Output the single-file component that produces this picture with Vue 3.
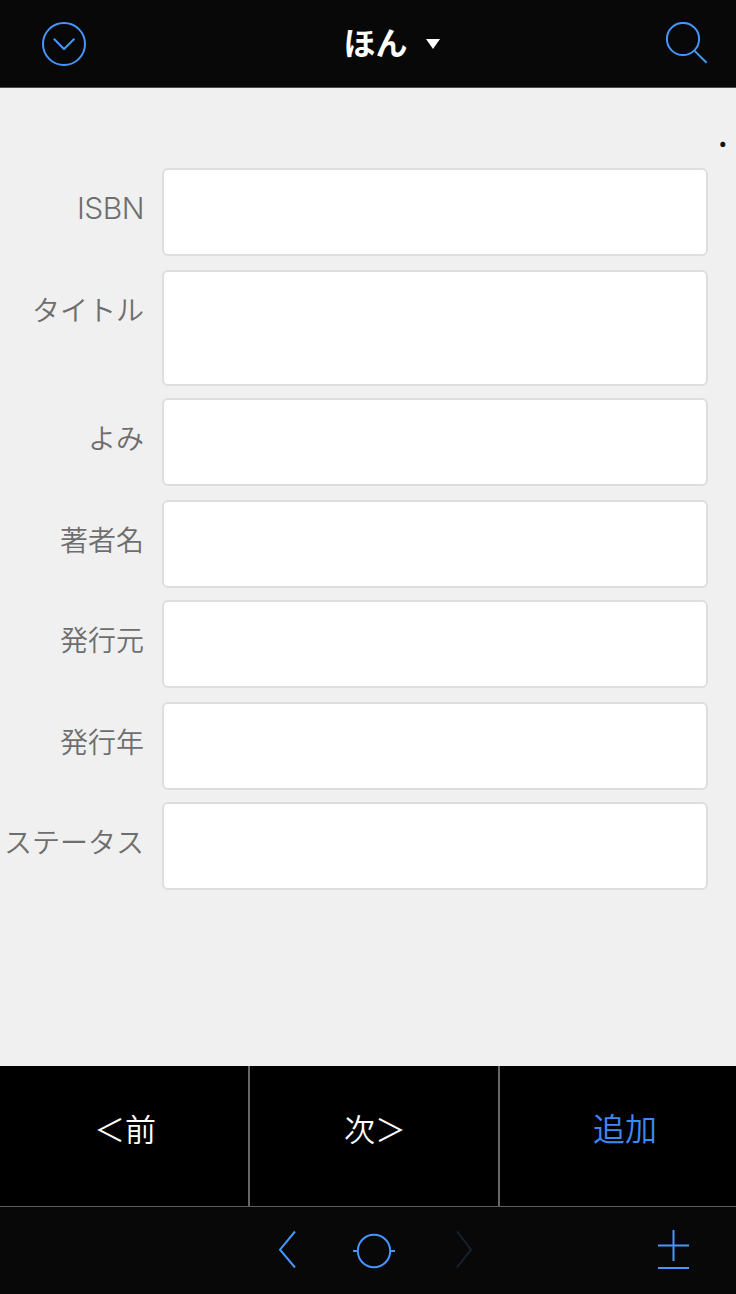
<script setup>
import { ref } from 'vue';

const title = ref('ほん');

const fields = ref([
    { id: 'isbn', label: 'ISBN', value: '', latin: true },
    { id: 'title', label: 'タイトル', value: '', tall: true },
    { id: 'yomi', label: 'よみ', value: '' },
    { id: 'author', label: '著者名', value: '' },
    { id: 'publisher', label: '発行元', value: '' },
    { id: 'year', label: '発行年', value: '' },
    { id: 'status', label: 'ステータス', value: '' }
]);

const actions = [
    { id: 'prev', label: '＜前' },
    { id: 'next', label: '次＞' },
    { id: 'add', label: '追加', primary: true }
];
</script>

<template>
    <div class="screen">
        <!-- Header -->
        <header class="navbar">
            <button class="icon-btn">
                <svg class="icon" width="46" height="46" viewBox="0 0 46 46">
                    <circle cx="23" cy="23" r="21" />
                    <path d="M12.8 17.8 L23 28 L33.4 17.8" />
                </svg>
            </button>
            <h1 class="navbar-title">
                <span>{{ title }}</span>
                <svg class="caret" width="14" height="10" viewBox="0 0 14 10">
                    <path d="M0 0 H14 L7 10 Z" />
                </svg>
            </h1>
            <button class="icon-btn">
                <svg class="icon" width="44" height="44" viewBox="0 0 44 44">
                    <circle cx="19" cy="17" r="16.1" />
                    <path d="M30.3 28.6 L42.6 40.8" />
                </svg>
            </button>
        </header>

        <!-- Body -->
        <main class="content">
            <div class="marker">.</div>
            <form class="form" @submit.prevent>
                <div v-for="field in fields" :key="field.id" class="field" :class="{ tall: field.tall }">
                    <label :for="field.id" :class="{ latin: field.latin }">{{ field.label }}</label>
                    <input :id="field.id" v-model="field.value" type="text">
                </div>
            </form>
        </main>

        <!-- Actions -->
        <div class="actions">
            <button v-for="action in actions" :key="action.id" class="action" :class="{ primary: action.primary }">
                {{ action.label }}
            </button>
        </div>

        <!-- Toolbar -->
        <footer class="toolbar">
            <svg class="icon back" width="20" height="42" viewBox="0 0 20 42">
                <path d="M17 2.5 L2 20.7 L17 38.5" />
            </svg>
            <svg class="icon knob" width="44" height="42" viewBox="0 0 44 42">
                <circle cx="22" cy="22" r="16.2" />
                <path d="M1 22 H6 M38 22 H43" />
            </svg>
            <svg class="icon forward" width="20" height="42" viewBox="0 0 20 42">
                <path d="M3 2.5 L17 20.7 L3 38.5" />
            </svg>
            <svg class="icon plus-minus" width="31" height="42" viewBox="0 0 31 42">
                <path d="M15.5 1 V32 M0 16.5 H31 M0 39 H31" />
            </svg>
        </footer>
    </div>
</template>

<style>
body {
    margin: 0;
    background: #000;
}
</style>

<style scoped>
.screen {
    display: flex;
    flex-direction: column;
    width: 736px;
    height: 1294px;
    overflow: hidden;
    background: #f0f0f0;
    font-family: "Noto Sans CJK JP", sans-serif;
}

button {
    padding: 0;
    border: 0;
    background: none;
    font-family: inherit;
}

.icon {
    display: block;
    fill: none;
    stroke: #4696ff;
    stroke-width: 2;
}

.navbar {
    display: flex;
    flex: none;
    align-items: center;
    justify-content: space-between;
    box-sizing: border-box;
    height: 88px;
    padding: 0 28px 0 41px;
    border-bottom: 1px solid #4c4c4c;
    background: #080808;
}

.navbar-title {
    display: flex;
    align-items: center;
    gap: 18px;
    margin: 0;
    padding-left: 32px;
    color: #fff;
    font-size: 32px;
    font-weight: 700;
    line-height: 48px;
}

.navbar-title span {
    padding-bottom: 5px;
}

.caret {
    fill: #fff;
}

.content {
    flex: 1;
    padding: 20px 28px 0 0;
}

.marker {
    height: 60px;
    margin-right: -20px;
    color: #111;
    font-size: 38px;
    line-height: 46px;
    text-align: right;
}

.field {
    display: flex;
    gap: 18px;
    height: 88px;
    margin-bottom: 14px;
}

.field.tall {
    height: 116px;
}

.field:nth-child(even) {
    margin-bottom: 12px;
}

.field label {
    flex: none;
    width: 144px;
    color: #6e6e6e;
    font-size: 28px;
    font-weight: 350;
    line-height: 79px;
    text-align: right;
    white-space: nowrap;
}

.field label.latin {
    font-family: Inter, "Liberation Sans", sans-serif;
    font-size: 30px;
    font-weight: 300;
    letter-spacing: -0.5px;
    line-height: 80px;
}

.field input {
    flex: 1;
    box-sizing: border-box;
    min-width: 0;
    height: 100%;
    padding: 0 16px;
    border: 2px solid #dedede;
    border-radius: 6px;
    outline: none;
    background: #fff;
    font-size: 28px;
}

.actions {
    display: flex;
    flex: none;
    height: 140px;
    background: #000;
}

.action {
    flex: none;
    box-sizing: border-box;
    width: 250px;
    padding: 0 0 18px 2px;
    border-right: 2px solid #666;
    color: #fff;
    font-size: 31px;
    font-weight: 350;
}

.action.primary {
    color: #3c89f4;
    font-size: 32px;
}

.toolbar {
    display: flex;
    flex: none;
    align-items: flex-start;
    box-sizing: border-box;
    height: 88px;
    padding: 22px 47px 0 278px;
    border-top: 1px solid #5c5c5c;
    background: #080808;
}

.knob {
    margin-left: 54px;
}

.forward {
    margin-left: 58px;
    stroke: #18202e;
}

.plus-minus {
    margin-left: auto;
}
</style>
